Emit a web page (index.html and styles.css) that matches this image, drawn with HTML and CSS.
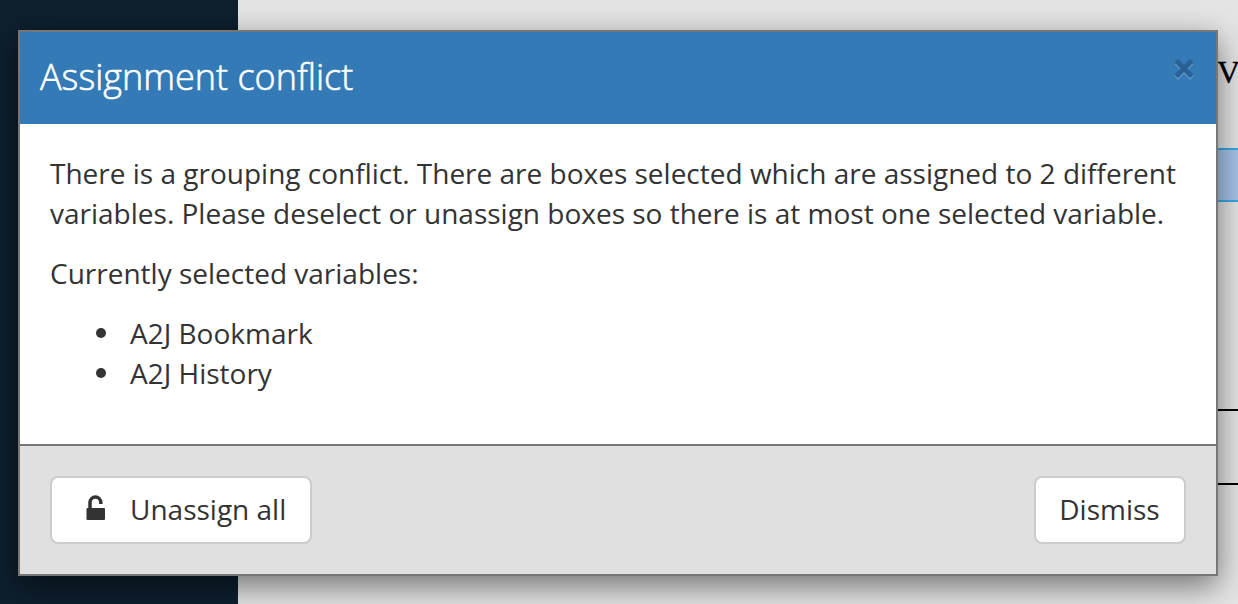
FILE: index.html
```html
<!DOCTYPE html>
<html lang="en">
<head>
<meta charset="utf-8">
<title>Assignment conflict</title>
<link rel="stylesheet" href="styles.css">
</head>
<body>
<div class="page">
  <div class="sidebar"></div>
  <div class="canvas">
    <span class="doc-text">V</span>
    <div class="doc-box"></div>
    <div class="doc-line first"></div>
    <div class="doc-line second"></div>
  </div>
</div>
<section class="modal" role="dialog">
  <header class="modal-header">
    <h1 class="modal-title">Assignment conflict</h1>
    <button class="close" aria-label="Close">
      <svg width="22" height="24" viewBox="0 0 22 24">
        <path class="close-glow" d="M1.5 5.500 5 2l6 6 6-6 3.500 3.500-6 6 6 6L17 21l-6-6-6 6-3.500-3.500 6-6z" transform="translate(0 2)"/>
        <path class="close-mark" d="M1.5 5.500 5 2l6 6 6-6 3.500 3.500-6 6 6 6L17 21l-6-6-6 6-3.500-3.500 6-6z"/>
      </svg>
    </button>
  </header>
  <div class="modal-body">
    <p>There is a grouping conflict. There are boxes selected which are assigned to 2 different<br>variables. Please deselect or unassign boxes so there is at most one selected variable.</p>
    <p>Currently selected variables:</p>
    <ul>
      <li>A2J Bookmark</li>
      <li>A2J History</li>
    </ul>
  </div>
  <footer class="modal-footer">
    <button class="btn btn-unassign">
      <svg class="lock" width="20" height="26" viewBox="0 0 20 26">
        <path class="shackle" d="M4 13V7.500a5.300 5.300 0 0 1 10.800 0V9"/>
        <rect x="0.500" y="13" width="18.500" height="12" rx="1"/>
      </svg>
      <span>Unassign all</span>
    </button>
    <button class="btn">Dismiss</button>
  </footer>
</section>
</body>
</html>
```
FILE: styles.css
```css
* { box-sizing: border-box; }
body {
  margin: 0;
  height: 604px;
  overflow: hidden;
  position: relative;
  font: 28px/40px "Open Sans", sans-serif;
  color: #333;
}
.page { display: flex; height: 604px; }
.sidebar { width: 238px; background: #0e1f2e; }
.canvas { position: relative; flex: 1; background: #e5e5e5; }
.doc-text {
  position: absolute;
  left: 979px;
  top: 52px;
  font: 32px/40px "Liberation Serif", serif;
  color: #000;
  -webkit-text-stroke: .4px #000;
}
.doc-box {
  position: absolute;
  left: 900px;
  right: 0;
  top: 148px;
  height: 54px;
  background: #a6c4e8;
  border: solid #38aae6;
  border-width: 2px 0;
}
.doc-line { position: absolute; left: 900px; right: 0; height: 2px; background: #000; }
.first { top: 409px; }
.second { top: 483px; }
.modal {
  position: absolute;
  left: 18px;
  top: 30px;
  width: 1200px;
  height: 546px;
  display: flex;
  flex-direction: column;
  background: #fff;
  border: 2px solid #777;
  box-shadow: 0 10px 30px rgba(0, 0, 0, .5);
}
.modal-header {
  display: flex;
  justify-content: space-between;
  align-items: flex-start;
  height: 92px;
  padding: 25px 21px 0 20px;
  background: #337ab7;
}
.modal-title {
  margin: 0;
  font-size: 36px;
  line-height: 40px;
  font-weight: 300;
  color: #fff;
  -webkit-text-stroke: .6px #fff;
}
.close { display: flex; padding: 0; border: 0; background: none; }
.close-mark { fill: #296292; }
.close-glow { fill: #5b95c7; }
.modal-body { flex: 1; padding: 29px 30px 30px; white-space: nowrap; }
.modal-body p { margin: 0 0 20px; }
.modal-body ul { margin: 0; padding-left: 46px; list-style: none; }
.modal-body li { display: flex; align-items: center; gap: 24px; }
.modal-body li::before {
  content: "";
  width: 10px;
  height: 10px;
  border-radius: 50%;
  background: #333;
}
.modal-footer {
  display: flex;
  justify-content: space-between;
  height: 130px;
  padding: 30px;
  background: #e0e0e0;
  border-top: 2px solid #777;
}
.btn {
  display: flex;
  align-items: center;
  justify-content: center;
  width: 152px;
  height: 68px;
  padding: 0 1px 2px 0;
  border: 2px solid #ccc;
  border-radius: 8px;
  background: #fff;
  color: #333;
  font: inherit;
  white-space: nowrap;
}
.btn-unassign { width: 262px; justify-content: flex-start; padding-left: 34px; gap: 24px; }
.lock { fill: #333; margin-top: -3px; }
.shackle { fill: none; stroke: #333; stroke-width: 3.500px; }
```
